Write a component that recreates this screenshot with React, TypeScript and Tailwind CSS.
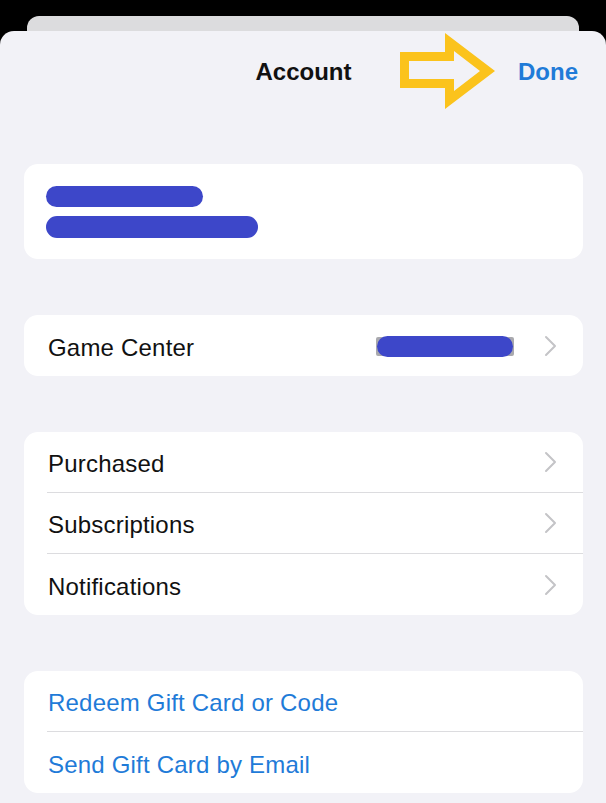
import { ReactNode } from "react";

const Chevron = () => (
  <svg width="13" height="22" viewBox="0 0 13 22" fill="none" className="shrink-0">
    <path d="M2 2 L11 11 L2 20" stroke="#c4c4c7" strokeWidth="2" strokeLinecap="round" strokeLinejoin="round" />
  </svg>
);

type RowProps = {
  label: string;
  blue?: boolean;
  last?: boolean;
  right?: ReactNode;
  chevron?: boolean;
};

const Row = ({ label, blue, last, right, chevron }: RowProps) => (
  <div className={`ml-[23px] h-[61px] flex items-center pr-[26px] ${last ? "" : "border-b border-[#dcdcdf]"}`}>
    <span className={`pl-[1px] pt-[4px] text-[24px] leading-none tracking-[0.2px] ${blue ? "text-[#1f7bd8]" : "text-[#111]"}`}>
      {label}
    </span>
    <div className="flex-1" />
    {right}
    {chevron && <Chevron />}
  </div>
);

const Scribble = ({ w, h }: { w: number; h: number }) => (
  <div className="rounded-full bg-[#3d47c9]" style={{ width: w, height: h }} />
);

export default function App() {
  return (
    <div className="w-[606px] h-[803px] bg-black overflow-hidden flex flex-col relative font-['Liberation_Sans',Arial,sans-serif]">
      {/* card stacked behind the sheet */}
      <div className="mx-[27px] mt-[16px] h-[15px] rounded-t-[12px] bg-[#dcdcde] shrink-0" />

      <div className="flex-1 bg-[#f2f2f7] rounded-t-[14px] px-[23px] pl-[24px] flex flex-col">
        <div className="h-[82px] flex items-center justify-center relative shrink-0">
          <span className="text-[24px] font-bold text-[#111] leading-none">Account</span>
          <span className="absolute right-[5px] text-[24px] font-bold text-[#1f7bd8] leading-none">Done</span>
        </div>

        <div className="mt-[51px] h-[95px] bg-white rounded-[14px] pt-[22px] pl-[22px] flex flex-col gap-[9px]">
          <Scribble w={157} h={21} />
          <Scribble w={212} h={22} />
        </div>

        <div className="mt-[56px] bg-white rounded-[14px]">
          <Row
            label="Game Center"
            last
            chevron
            right={
              <div className="mr-[30px] mt-[2px] px-[1px] bg-[#a9a9ae] h-[19px] flex items-center rounded-[2px]">
                <Scribble w={136} h={21} />
              </div>
            }
          />
        </div>

        <div className="mt-[56px] bg-white rounded-[14px]">
          <Row label="Purchased" chevron />
          <Row label="Subscriptions" chevron />
          <Row label="Notifications" chevron last />
        </div>

        <div className="mt-[56px] bg-white rounded-[14px]">
          <Row label="Redeem Gift Card or Code" blue />
          <Row label="Send Gift Card by Email" blue last />
        </div>
      </div>

      {/* yellow annotation arrow */}
      <svg className="absolute left-0 top-0 pointer-events-none" width="606" height="120" viewBox="0 0 606 120">
        <path
          fillRule="evenodd"
          fill="#fbc31c"
          d="M400 52 L445 52 L445 33 L495 71 L445 109 L445 88 L400 88 Z M409 61 L454 61 L454 51 L480 71 L454 91 L454 79 L409 79 Z"
        />
      </svg>
    </div>
  );
}
